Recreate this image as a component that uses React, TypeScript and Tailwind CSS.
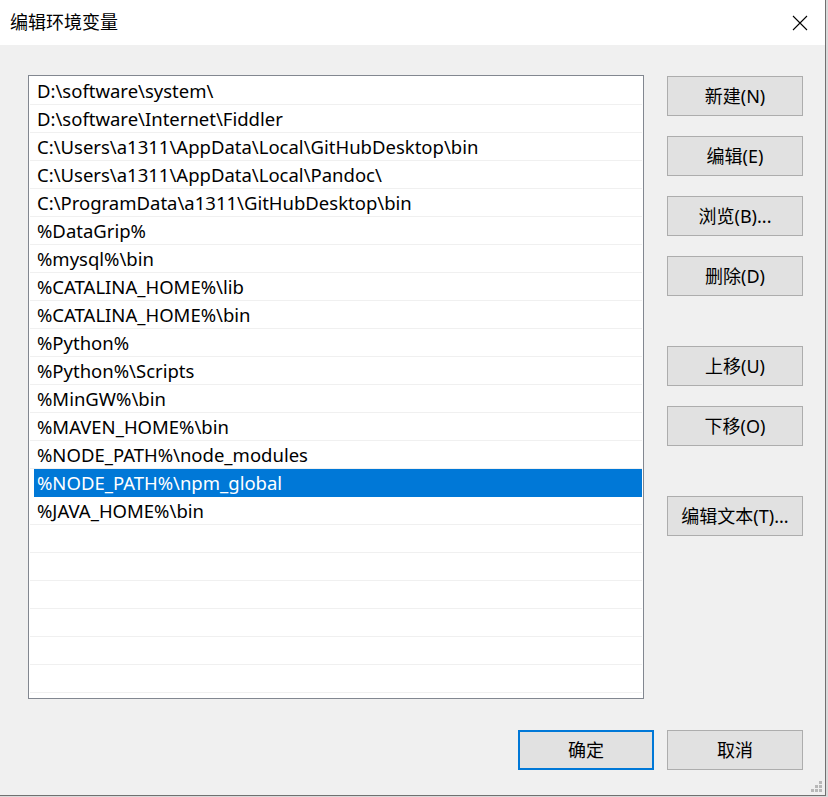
import React from "react";

const paths = [
  "D:\\software\\system\\",
  "D:\\software\\Internet\\Fiddler",
  "C:\\Users\\a1311\\AppData\\Local\\GitHubDesktop\\bin",
  "C:\\Users\\a1311\\AppData\\Local\\Pandoc\\",
  "C:\\ProgramData\\a1311\\GitHubDesktop\\bin",
  "%DataGrip%",
  "%mysql%\\bin",
  "%CATALINA_HOME%\\lib",
  "%CATALINA_HOME%\\bin",
  "%Python%",
  "%Python%\\Scripts",
  "%MinGW%\\bin",
  "%MAVEN_HOME%\\bin",
  "%NODE_PATH%\\node_modules",
  "%NODE_PATH%\\npm_global",
  "%JAVA_HOME%\\bin",
];

const SELECTED = 14;
const font = { fontFamily: '"Noto Sans", "Noto Sans CJK SC", sans-serif' };

function Btn({ label, primary }: { label: string; primary?: boolean }) {
  return (
    <button
      className={`w-[136px] h-[40px] bg-[#e1e1e1] text-[18px] text-black flex items-center justify-center ${
        primary ? "border-2 border-[#0078d7]" : "border border-[#adadad]"
      }`}
    >
      {label}
    </button>
  );
}

export default function App() {
  const rows = [...paths, ...Array(22 - paths.length).fill("")];
  return (
    <div className="w-[828px] h-[797px] bg-[#dadada] overflow-hidden" style={font}>
      <div className="relative w-[826px] h-[796px] bg-[#f0f0f0] border-r border-b border-[#707070] flex flex-col">
        {/* title bar */}
        <div className="h-[45px] bg-white flex items-center justify-between pl-[10px] pr-[17px] shrink-0">
          <span className="text-[18px] text-black">编辑环境变量</span>
          <svg width="16" height="16" viewBox="0 0 16 16">
            <path d="M1 1 L15 15 M15 1 L1 15" stroke="#000" strokeWidth="1.1" fill="none" />
          </svg>
        </div>

        <div className="flex pt-[30px] pl-[28px] gap-[23px]">
          <div className="w-[616px] h-[624px] bg-white border border-[#828790] pt-[1px] overflow-hidden">
            {rows.map((p, i) => (
              <div
                key={i}
                className={`h-[28px] flex items-center text-[18.5px] whitespace-nowrap ${
                  i === SELECTED
                    ? "ml-[5px] mr-[1px] pl-[3px] bg-[#0078d7] text-white"
                    : "mx-[1px] pl-[7px] border-b border-[#f0f0f0] text-black"
                }`}
              >
                {p}
              </div>
            ))}
          </div>

          <div className="flex flex-col pt-[1px]">
            <div className="flex flex-col gap-[20px]">
              <Btn label="新建(N)" />
              <Btn label="编辑(E)" />
              <Btn label="浏览(B)..." />
              <Btn label="删除(D)" />
            </div>
            <div className="flex flex-col gap-[20px] mt-[50px]">
              <Btn label="上移(U)" />
              <Btn label="下移(O)" />
            </div>
            <div className="mt-[50px]">
              <Btn label="编辑文本(T)..." />
            </div>
          </div>
        </div>

        <div className="flex justify-end gap-[13px] pr-[22px] mt-[31px]">
          <Btn label="确定" primary />
          <Btn label="取消" />
        </div>

        {/* resize grip */}
        <div className="absolute right-[3px] bottom-[3px] grid grid-cols-3 gap-[1px]">
          <span className="w-[3px] h-[3px]" />
          <span className="w-[3px] h-[3px]" />
          <span className="w-[3px] h-[3px] bg-[#b8b8b8]" />
          <span className="w-[3px] h-[3px]" />
          <span className="w-[3px] h-[3px] bg-[#b8b8b8]" />
          <span className="w-[3px] h-[3px] bg-[#b8b8b8]" />
          <span className="w-[3px] h-[3px] bg-[#b8b8b8]" />
          <span className="w-[3px] h-[3px] bg-[#b8b8b8]" />
          <span className="w-[3px] h-[3px] bg-[#b8b8b8]" />
        </div>
      </div>
    </div>
  );
}
